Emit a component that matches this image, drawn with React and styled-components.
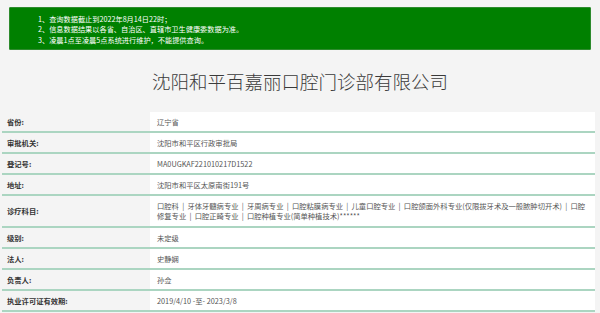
import styled, { createGlobalStyle } from 'styled-components';

const GlobalStyle = createGlobalStyle`
  body {
    margin: 0;
    background: #f4f4f4;
    font-family: "Noto Sans CJK SC", "Liberation Sans", sans-serif;
  }
`;

const Page = styled.div`
  width: 600px;
  height: 313px;
  overflow: hidden;
`;

const Notice = styled.ul`
  list-style: none;
  margin: 7px 9px 0 9px;
  padding: 6px 0 6px 28px;
  height: 29px;
  background: #008000;
  border: 1px solid #2e8b2e;
  border-radius: 1px;
  color: #fff;
  font-size: 7.2px;
  line-height: 10.4px;
`;

const Title = styled.h1`
  margin: 0;
  height: 62px;
  display: flex;
  align-items: center;
  justify-content: center;
  font-size: 18.5px;
  font-weight: 300;
  color: #3a3a3a;
`;

const Table = styled.div`
  margin: 0 5px 0 2px;
  display: flex;
  flex-direction: column;
`;

const Row = styled.div`
  display: grid;
  grid-template-columns: 148px 1fr;
  border-bottom: 2px solid #abd5c1;
  min-height: 19px;
`;

const Label = styled.div`
  display: flex;
  align-items: center;
  padding-left: 5px;
  font-size: 7.3px;
  font-weight: 600;
  color: #333;
`;

const Value = styled.div`
  display: flex;
  align-items: center;
  background: #fff;
  padding: ${(p) => (p.$multi ? '5px 4px 5px 7px' : '0 4px 0 7px')};
  font-size: 7.3px;
  line-height: 10px;
  color: #555;
`;

const rows = [
  ['省份:', '辽宁省'],
  ['审批机关:', '沈阳市和平区行政审批局'],
  ['登记号:', 'MA0UGKAF221010217D1522'],
  ['地址:', '沈阳市和平区太原南街191号'],
  [
    '诊疗科目:',
    '口腔科 \u00a0|\u00a0 牙体牙髓病专业 \u00a0|\u00a0 牙周病专业 \u00a0|\u00a0 口腔粘膜病专业 \u00a0|\u00a0 儿童口腔专业 \u00a0|\u00a0 口腔颌面外科专业(仅限拔牙术及一般脓肿切开术) \u00a0|\u00a0 口腔修复专业 \u00a0|\u00a0 口腔正畸专业 \u00a0|\u00a0 口腔种植专业(简单种植技术)******',
    true,
  ],
  ['级别:', '未定级'],
  ['法人:', '史静娴'],
  ['负责人:', '孙佥'],
  ['执业许可证有效期:', '2019/4/10 -至- 2023/3/8'],
];

export default function App() {
  return (
    <Page>
      <GlobalStyle />
      <Notice>
        <li>1、查询数据截止到2022年8月14日22时；</li>
        <li>2、信息数据结果以各省、自治区、直辖市卫生健康委数据为准。</li>
        <li>3、凌晨1点至凌晨5点系统进行维护，不能提供查询。</li>
      </Notice>
      <Title>沈阳和平百嘉丽口腔门诊部有限公司</Title>
      <Table>
        {rows.map(([label, value, multi]) => (
          <Row key={label}>
            <Label>{label}</Label>
            <Value $multi={multi}>{multi ? <span>{value}</span> : value}</Value>
          </Row>
        ))}
      </Table>
    </Page>
  );
}
